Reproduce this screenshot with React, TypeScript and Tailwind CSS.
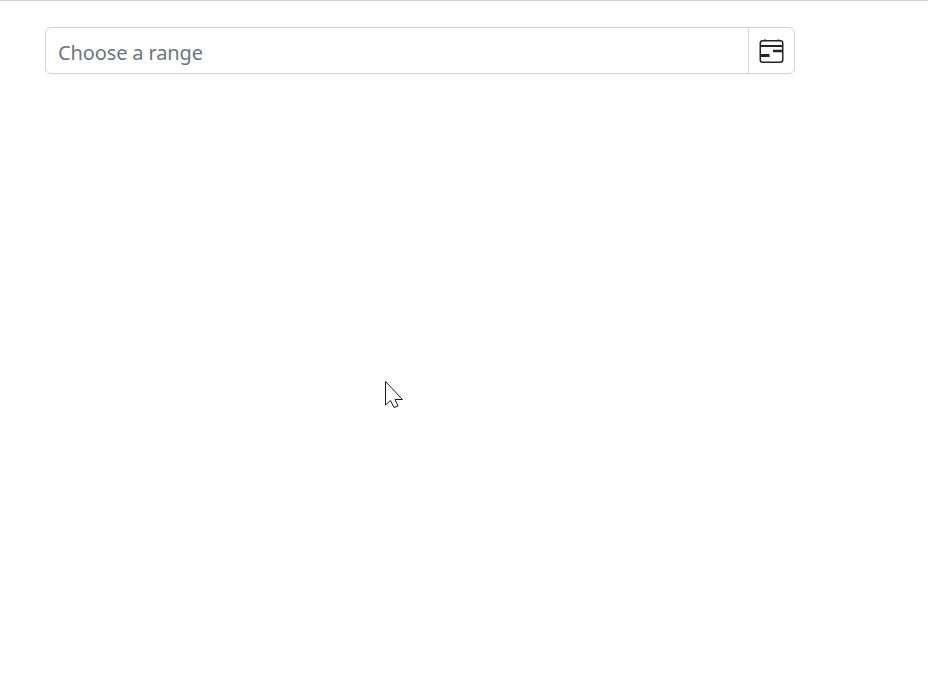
import React from "react";

function RangeIcon() {
  return (
    <svg width="25" height="25" viewBox="0 0 25 25" fill="none" stroke="#212529" aria-hidden="true">
      <rect x="1.25" y="2.75" width="22.5" height="21.5" rx="2.5" strokeWidth="1.5" />
      <path d="M1 8h23" strokeWidth="1.9" />
      <path d="M6 1.500v1.500M19.500 1.500v1.500" strokeWidth="2" />
      <path d="M14 13h10" strokeWidth="2.5" />
      <path d="M1 17.500h9.500" strokeWidth="3" />
    </svg>
  );
}

export default function App() {
  return (
    <main className="relative h-[676px] w-full overflow-hidden border-t border-[#d1d1d1] bg-white pl-[45px] pt-[26px]">
      <div className="flex h-[47px] w-[750px] overflow-hidden rounded-[6px] border border-[#ced4da]">
        <div className="flex flex-1 items-center pl-3 pt-1 font-['Noto_Sans',sans-serif] text-[20px] leading-none tracking-[-0.13px] text-[#6c757d]">
          Choose a range
        </div>
        <button type="button" aria-label="Open calendar" className="flex w-[46px] items-center justify-center border-l border-[#ced4da]">
          <RangeIcon />
        </button>
      </div>
      <svg className="absolute left-[385px] top-[379px]" width="19" height="29" viewBox="0 0 19 29" aria-hidden="true">
        <path d="M.5 1.500v23.500l5-4.500 3.500 7 4-1.500-3-6.500h7.500z" fill="white" stroke="#171723" strokeWidth="1" />
      </svg>
    </main>
  );
}
